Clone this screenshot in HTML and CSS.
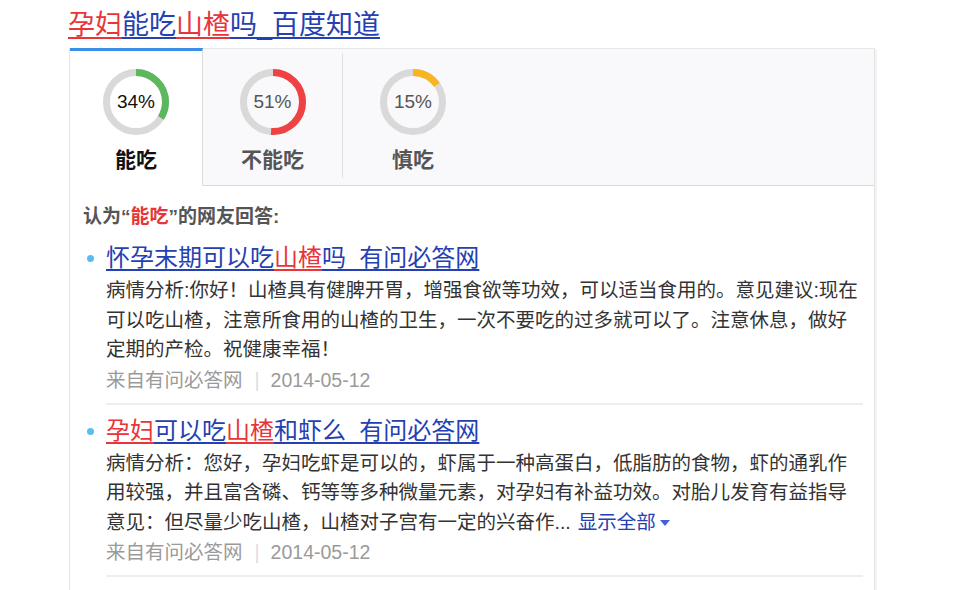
FILE: index.html
```html
<!DOCTYPE html>
<html lang="zh-CN">
<head>
<meta charset="utf-8">
<title>孕妇能吃山楂吗_百度知道</title>
<link rel="stylesheet" href="styles.css">
</head>
<body>
<h1 class="page-title"><a class="title-link" href="#"><span class="hl">孕妇</span><span class="nm">能吃</span><span class="hl">山楂</span><span class="nm">吗_百度知道</span></a></h1>
<div class="card">
  <div class="tabs">
    <div class="tab active">
      <div class="ring">
        <svg width="66" height="66" viewBox="0 0 66 66"><circle cx="33" cy="33" r="29.5" fill="none" stroke="#d9d9d9" stroke-width="7"/><circle cx="33" cy="33" r="29.5" fill="none" stroke="#5cb85c" stroke-width="7" stroke-dasharray="63.0 200" transform="rotate(-90 33 33)"/></svg>
        <span class="pct">34%</span>
      </div>
      <div class="tab-label">能吃</div>
    </div>
    <div class="tab tab-mid">
      <div class="ring">
        <svg width="66" height="66" viewBox="0 0 66 66"><circle cx="33" cy="33" r="29.5" fill="none" stroke="#d9d9d9" stroke-width="7"/><circle cx="33" cy="33" r="29.5" fill="none" stroke="#f04143" stroke-width="7" stroke-dasharray="94.5 200" transform="rotate(-90 33 33)"/></svg>
        <span class="pct">51%</span>
      </div>
      <div class="tab-label">不能吃</div>
    </div>
    <div class="tab-sep"></div>
    <div class="tab">
      <div class="ring">
        <svg width="66" height="66" viewBox="0 0 66 66"><circle cx="33" cy="33" r="29.5" fill="none" stroke="#d9d9d9" stroke-width="7"/><circle cx="33" cy="33" r="29.5" fill="none" stroke="#f8b521" stroke-width="7" stroke-dasharray="27.8 200" transform="rotate(-90 33 33)"/></svg>
        <span class="pct">15%</span>
      </div>
      <div class="tab-label">慎吃</div>
    </div>
    <div class="tab-fill"></div>
  </div>
  <div class="content">
    <div class="answers-head">认为“<em class="red">能吃</em>”的网友回答:</div>
    <ul class="answers">
      <li class="answer">
        <span class="dot-col"><span class="dot"></span></span>
        <div class="answer-body">
          <a class="answer-title" href="#"><span class="nm">怀孕末期可以吃</span><span class="hl">山楂</span><span class="nm">吗_有问必答网</span></a>
          <p class="answer-text">病情分析:你好！山楂具有健脾开胃，增强食欲等功效，可以适当食用的。意见建议:现在可以吃山楂，注意所食用的山楂的卫生，一次不要吃的过多就可以了。注意休息，做好定期的产检。祝健康幸福！</p>
          <div class="meta">来自有问必答网<span class="sep">|</span>2014-05-12</div>
        </div>
      </li>
      <li class="answer">
        <span class="dot-col"><span class="dot"></span></span>
        <div class="answer-body">
          <a class="answer-title" href="#"><span class="hl">孕妇</span><span class="nm">可以吃</span><span class="hl">山楂</span><span class="nm">和虾么_有问必答网</span></a>
          <p class="answer-text">病情分析：您好，孕妇吃虾是可以的，虾属于一种高蛋白，低脂肪的食物，虾的通乳作用较强，并且富含磷、钙等等多种微量元素，对孕妇有补益功效。对胎儿发育有益指导意见：但尽量少吃山楂，山楂对子宫有一定的兴奋作...<span class="gap"></span><a class="more" href="#">显示全部</a><svg class="caret" width="10" height="6" viewBox="0 0 10 6"><path d="M0 0 H10 L5 6 Z" fill="#4360d8"/></svg></p>
          <div class="meta">来自有问必答网<span class="sep">|</span>2014-05-12</div>
        </div>
      </li>
    </ul>
  </div>
</div>
</body>
</html>
```
FILE: styles.css
```css
* { box-sizing: border-box; }
html, body { margin: 0; padding: 0; background: #fff; }
body {
  font-family: "Liberation Sans", "Noto Sans CJK SC", sans-serif;
  color: #333;
}
.page-title {
  margin: 8px 0 6px 68px;
  font-size: 27px;
  line-height: 34px;
  font-weight: normal;
}
.title-link { text-decoration: none; }
.title-link span, .answer-title span { text-decoration: underline; text-underline-offset: 3px; }
.nm { color: #2440b3; }
.hl { color: #e8353a; }

.card {
  margin-left: 69px;
  width: 806px;
  border-left: 1px solid #e3e3e3;
  border-right: 1px solid #e3e3e3;
  box-shadow: 3px 0 0 -1px #f3f3f3;
}
.tabs {
  display: flex;
  background: #f9f9fb;
}
.tab {
  width: 140px;
  display: flex;
  flex-direction: column;
  align-items: center;
  border-top: 1px solid #e6e6e6;
  border-bottom: 1px solid #dadada;
  padding: 20px 0 10px;
}
.tab-mid { width: 139px; }
.tab.active {
  width: 133px;
  background: #fff;
  border-top: 3px solid #3a8ee6;
  border-bottom: none;
  border-right: 1px solid #dcdcdc;
  padding: 18px 0 11px;
}
.tab-sep {
  border-top: 1px solid #e6e6e6;
  border-bottom: 1px solid #dadada;
  width: 1px;
  display: flex;
}
.tab-sep::before {
  content: "";
  flex: 1;
  margin: 4px 0 7px;
  border-left: 1px solid #e2e2e2;
}
.tab-fill {
  flex: 1;
  border-top: 1px solid #e6e6e6;
  border-bottom: 1px solid #dadada;
}
.ring {
  display: grid;
  width: 66px;
  height: 66px;
  place-items: center;
}
.ring > * { grid-area: 1 / 1; }
.ring svg { display: block; }
.pct {
  font-family: "Liberation Sans", sans-serif;
  font-size: 19px;
  color: #555;
}
.active .pct { color: #111; }
.tab-label {
  margin-top: 10px;
  font-size: 21px;
  line-height: 30px;
  font-weight: bold;
  color: #555;
}
.active .tab-label { color: #111; }

.content {
  padding: 16px 11px 20px 13px;
  background: #fff;
}
.answers-head {
  font-size: 19px;
  line-height: 30px;
  font-weight: bold;
  color: #555;
}
.red { font-style: normal; color: #e8353a; }
.answers { list-style: none; margin: 0; padding: 0; }
.answer {
  display: flex;
  padding-top: 9px;
}
.dot-col {
  width: 23px;
  flex: none;
  padding: 14px 0 0 4px;
}
.dot {
  display: block;
  width: 7px;
  height: 7px;
  border-radius: 50%;
  background: #5bbcf4;
}
.answer-body {
  width: 757px;
  padding-bottom: 8px;
  border-bottom: 2px solid #eeeeee;
}
.answer-title {
  display: block;
  font-size: 24px;
  line-height: 34px;
  text-decoration: none;
}
.answer-text {
  margin: 1px 0 0;
  font-size: 19.5px;
  line-height: 29.5px;
  color: #333;
}
.gap { display: inline-block; width: 7px; }
.more {
  color: #2440b3;
  text-decoration: none;
}
.caret { margin-left: 4px; vertical-align: 3px; }
.meta {
  font-size: 19.5px;
  line-height: 30px;
  color: #9a9a9a;
}
.sep {
  color: #dddddd;
  margin: 0 11px 0 12px;
}
```
